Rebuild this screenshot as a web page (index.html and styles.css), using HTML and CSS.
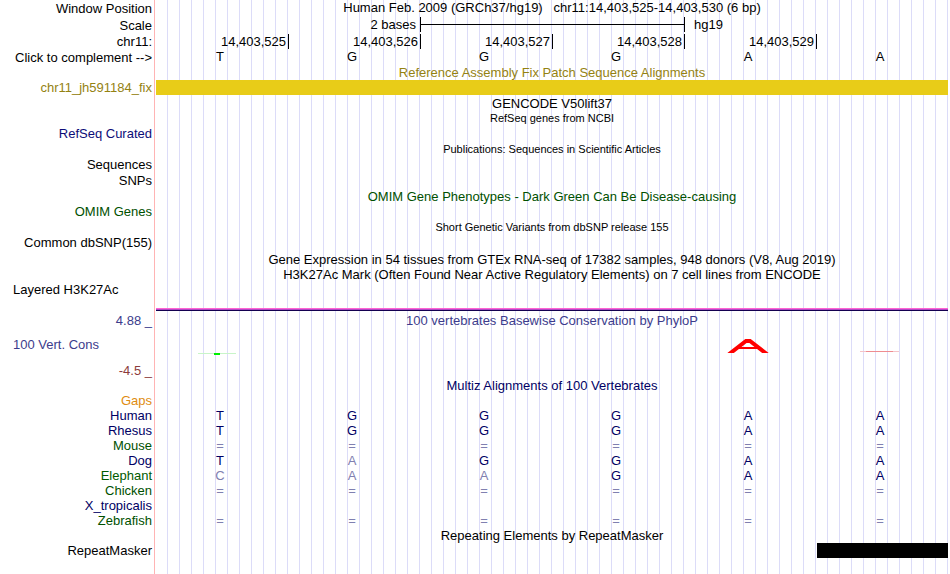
FILE: index.html
```html
<!DOCTYPE html>
<html lang="en">
<head>
  <meta charset="UTF-8">
  <meta name="viewport" content="width=device-width, initial-scale=1.0">
  <title>Human chr11:14,403,525-14,403,530</title>
  <link rel="stylesheet" href="styles.css">
</head>
<body>
  <div class="browser">
    <table class="tracks">
      <colgroup>
        <col class="label-col">
        <col span="6">
      </colgroup>
      <tbody>
        <!-- Ruler -->
        <tr class="row-17">
          <th scope="row">Window Position</th>
          <td colspan="6" class="position">Human Feb. 2009 (GRCh37/hg19) &nbsp; chr11:14,403,525-14,403,530 (6 bp)</td>
        </tr>
        <tr class="row-17">
          <th scope="row">Scale</th>
          <td></td>
          <td class="scale-size">2 bases</td>
          <td colspan="2" class="scale"><div class="scale-bar"></div></td>
          <td class="scale"><div class="scale-end">hg19</div></td>
          <td></td>
        </tr>
        <tr class="ruler">
          <th scope="row">chr11:</th>
          <td>14,403,525</td>
          <td class="tick">14,403,526</td>
          <td class="tick">14,403,527</td>
          <td class="tick">14,403,528</td>
          <td class="tick">14,403,529</td>
          <td class="tick"></td>
        </tr>
        <tr class="bases row-16">
          <th scope="row">Click to complement --&gt;</th>
          <td>T</td><td>G</td><td>G</td><td>G</td><td>A</td><td>A</td>
        </tr>

        <!-- Fix patches -->
        <tr class="gold">
          <th></th>
          <td colspan="6">Reference Assembly Fix Patch Sequence Alignments</td>
        </tr>
        <tr class="gold">
          <th scope="row">chr11_jh591184_fix</th>
          <td colspan="6" class="patch-bar"></td>
        </tr>

        <!-- Genes and publications -->
        <tr class="row-16">
          <th></th>
          <td colspan="6">GENCODE V50lift37</td>
        </tr>
        <tr>
          <th></th>
          <td colspan="6" class="small">RefSeq genes from NCBI</td>
        </tr>
        <tr>
          <th scope="row" class="blue">RefSeq Curated</th>
          <td colspan="6"></td>
        </tr>
        <tr class="row-16">
          <th></th>
          <td colspan="6" class="small">Publications: Sequences in Scientific Articles</td>
        </tr>
        <tr>
          <th scope="row">Sequences</th>
          <td colspan="6"></td>
        </tr>
        <tr class="row-16">
          <th scope="row">SNPs</th>
          <td colspan="6"></td>
        </tr>

        <!-- Variants -->
        <tr class="green row-16">
          <th></th>
          <td colspan="6">OMIM Gene Phenotypes - Dark Green Can Be Disease-causing</td>
        </tr>
        <tr class="green">
          <th scope="row">OMIM Genes</th>
          <td colspan="6"></td>
        </tr>
        <tr class="row-16">
          <th></th>
          <td colspan="6" class="small">Short Genetic Variants from dbSNP release 155</td>
        </tr>
        <tr>
          <th scope="row">Common dbSNP(155)</th>
          <td colspan="6"></td>
        </tr>

        <!-- Expression and regulation -->
        <tr class="row-17">
          <th></th>
          <td colspan="6">Gene Expression in 54 tissues from GTEx RNA-seq of 17382 samples, 948 donors (V8, Aug 2019)</td>
        </tr>
        <tr>
          <th></th>
          <td colspan="6">H3K27Ac Mark (Often Found Near Active Regulatory Elements) on 7 cell lines from ENCODE</td>
        </tr>
        <tr class="regulation">
          <th scope="row" class="left">Layered H3K27Ac</th>
          <td colspan="6"></td>
        </tr>

        <!-- Conservation -->
        <tr class="violet row-17">
          <th class="limit">4.88 _</th>
          <td colspan="6">100 vertebrates Basewise Conservation by PhyloP</td>
        </tr>
        <tr class="violet conservation">
          <th scope="row" class="left">100 Vert. Cons</th>
          <td>
            <svg width="44" height="34" viewBox="0 0 44 34">
              <rect x="0" y="25" width="38" height="1" fill="#c8f5c8"/>
              <rect x="16" y="25" width="6" height="2" fill="#00f000"/>
            </svg>
          </td>
          <td></td>
          <td></td>
          <td></td>
          <td>
            <svg width="44" height="25" viewBox="0 0 44 25" fill="none" stroke="#ff0000">
              <polyline points="2,27 20,13 24,13 42,27" stroke-width="4"/>
              <line x1="12" y1="20" x2="32" y2="20" stroke-width="2"/>
            </svg>
          </td>
          <td>
            <svg width="44" height="34" viewBox="0 0 44 34">
              <rect x="2" y="23" width="39" height="1" fill="#f5c4c8"/>
              <rect x="8" y="23" width="27" height="1" fill="#ee8c90"/>
            </svg>
          </td>
        </tr>
        <tr class="maroon row-16">
          <th>-4.5 _</th>
          <td colspan="6"></td>
        </tr>

        <!-- Multiple alignment -->
        <tr class="navy">
          <th></th>
          <td colspan="6">Multiz Alignments of 100 Vertebrates</td>
        </tr>
        <tr class="orange">
          <th scope="row">Gaps</th>
          <td colspan="6"></td>
        </tr>
        <tr class="bases navy">
          <th scope="row">Human</th>
          <td>T</td><td>G</td><td>G</td><td>G</td><td>A</td><td>A</td>
        </tr>
        <tr class="bases navy">
          <th scope="row">Rhesus</th>
          <td>T</td><td>G</td><td>G</td><td>G</td><td>A</td><td>A</td>
        </tr>
        <tr class="bases green unaligned">
          <th scope="row">Mouse</th>
          <td>=</td><td>=</td><td>=</td><td>=</td><td>=</td><td>=</td>
        </tr>
        <tr class="bases navy">
          <th scope="row">Dog</th>
          <td>T</td><td class="diff">A</td><td>G</td><td>G</td><td>A</td><td>A</td>
        </tr>
        <tr class="bases navy">
          <th scope="row" class="green">Elephant</th>
          <td class="diff">C</td><td class="diff">A</td><td class="diff">A</td><td>G</td><td>A</td><td>A</td>
        </tr>
        <tr class="bases green unaligned">
          <th scope="row">Chicken</th>
          <td>=</td><td>=</td><td>=</td><td>=</td><td>=</td><td>=</td>
        </tr>
        <tr class="navy">
          <th scope="row">X_tropicalis</th>
          <td colspan="6"></td>
        </tr>
        <tr class="bases green unaligned">
          <th scope="row">Zebrafish</th>
          <td>=</td><td>=</td><td>=</td><td>=</td><td>=</td><td>=</td>
        </tr>

        <!-- Repeats -->
        <tr>
          <th></th>
          <td colspan="6">Repeating Elements by RepeatMasker</td>
        </tr>
        <tr>
          <th scope="row">RepeatMasker</th>
          <td colspan="5"></td>
          <td class="repeat"><div class="repeat-bar"></div></td>
        </tr>
      </tbody>
    </table>
  </div>
</body>
</html>
```

FILE: styles.css
```css
body {
  margin: 0;
  background-color: #fff;
  color: #000;
  font-family: "Liberation Sans", Arial, sans-serif;
  font-size: 13px;
  line-height: 15px;
}
/* guide lines every 12px, pink line between labels and data */
.browser {
  min-height: 100vh;
  margin-right: 2px;
  background-image:
    linear-gradient(#ffb4b4, #ffb4b4),
    repeating-linear-gradient(to right, transparent 0, transparent 11px, #dcdcf8 11px, #dcdcf8 12px);
  background-repeat: no-repeat;
  background-position: 154px 0, 156px 0;
  background-size: 1px 100%, 100% 100%;
}
.tracks {
  width: 100%;
  table-layout: fixed;
  border-collapse: separate;
  border-spacing: 0;
}
.label-col {
  width: 156px;
}
tr {
  height: 15px;
}
.row-16 {
  height: 16px;
}
.row-17 {
  height: 17px;
}
th, td {
  padding: 0;
  font-weight: normal;
  text-align: center;
  vertical-align: middle;
  white-space: nowrap;
}
td {
  vertical-align: bottom;
}
th {
  padding-right: 4px;
  text-align: right;
}
th.left {
  padding-left: 13px;
  text-align: left;
}
.small {
  font-size: 11px;
}
.position {
  vertical-align: top;
}

/* Ruler */
.scale-size {
  padding-right: 4px;
  text-align: right;
  vertical-align: top;
}
.scale {
  vertical-align: top;
}
.scale-bar {
  height: 15px;
  border-left: 1px solid #000;
  background: linear-gradient(#000, #000) no-repeat center / 100% 1px;
}
.scale-end {
  padding-left: 9px;
  border-left: 1px solid #000;
  text-align: left;
}
.ruler td {
  padding-right: 2px;
  text-align: right;
}
.ruler .tick {
  border-left: 1px solid #000;
}
.bases td {
  padding-right: 4px;
  vertical-align: top;
}

/* Track colors */
.gold {
  color: #948212;
}
.blue {
  color: #0c0c78;
}
.green {
  color: #005000;
}
.violet {
  color: #3c3c8c;
}
.maroon {
  color: #8c3c3c;
}
.navy {
  color: #000064;
}
.orange {
  color: #e08c10;
}
.navy .green {
  color: #005a00;
}
.diff, .unaligned td {
  color: #8080b0;
}

/* Track drawings */
.patch-bar {
  background-color: #e8cc18;
}
.regulation {
  height: 29px;
}
.regulation th {
  vertical-align: top;
}
.regulation td {
  background: linear-gradient(#ff64d2 0, #ff64d2 1px, #b446c8 1px, #b446c8 2px, #140050 2px) no-repeat bottom / 100% 3px;
}
.limit {
  vertical-align: bottom;
}
.conservation {
  height: 34px;
}
.conservation th {
  padding-bottom: 2px;
}
.conservation td {
  padding-right: 4px;
  vertical-align: top;
}
.conservation svg {
  display: block;
  margin: 0 auto;
}
.repeat-bar {
  height: 15px;
  margin-left: 1px;
  background-color: #000;
}
```
